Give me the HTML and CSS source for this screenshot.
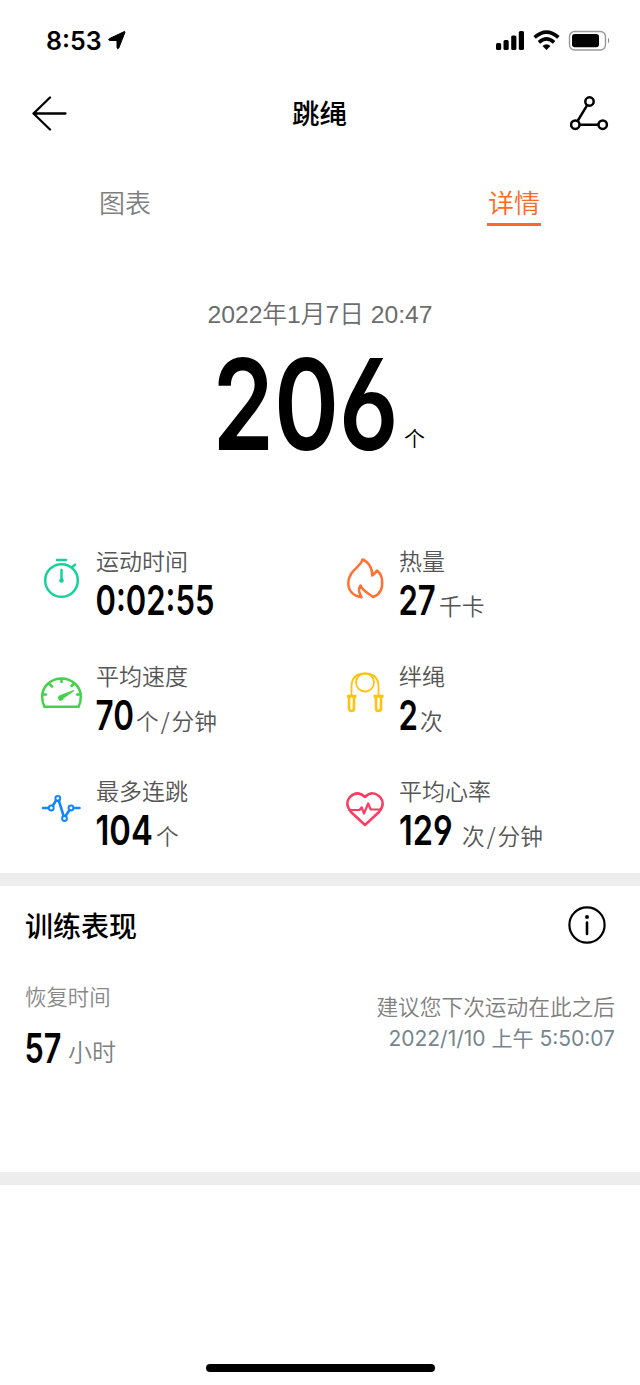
FILE: index.html
```html
<!DOCTYPE html>
<html lang="zh-CN">
<head>
<meta charset="utf-8">
<title>跳绳</title>
<link rel="stylesheet" href="styles.css">
</head>
<body>
<div class="screen">
  <header class="status">
    <div class="clock"><span>8:53</span>
      <svg width="18" height="19" viewBox="0 0 18 19"><path d="M17 1.200 10.800 17Q9.500 18.800 9 16.500V9.500H2Q-.5 9 1.600 7.500L15.800.8Q17.300.3 17 1.200Z" fill="#000" stroke="#000" stroke-linejoin="round"/></svg>
    </div>
    <svg class="signals" width="118" height="24" viewBox="494 28 118 24">
      <g fill="#000"><rect x="496" y="43" width="5.200" height="7" rx="1.500"/><rect x="503.500" y="40" width="5.200" height="10" rx="1.500"/><rect x="511.200" y="35.500" width="5.200" height="14.500" rx="1.500"/><rect x="518.800" y="31" width="5.200" height="19" rx="1.500"/></g>
      <g fill="none" stroke="#000" stroke-width="3.600"><path d="M534.600 37.300Q546.500 26.800 558.400 37.300"/><path d="M538.900 42.300Q546.500 35.600 554.100 42.300"/></g>
      <path d="M542.500 46Q546.500 42.300 550.500 46L546.500 50Z"/>
      <rect x="569.500" y="31.500" width="36" height="18.500" rx="5" fill="#fff" stroke="#999" stroke-width="1.400"/>
      <rect x="572" y="34" width="27" height="13.300" rx="2.800"/>
      <path d="M608 37.500Q610.500 40.500 608 43.500Z" fill="#888"/>
    </svg>
  </header>
  <nav class="nav">
    <svg width="36" height="36" viewBox="32 95 36 36"><path d="M50 97.500 33.500 113.500 50 129.500M33.500 113.500H65.500" fill="none" stroke="#000" stroke-width="2.300" stroke-linecap="round" stroke-linejoin="round"/></svg>
    <h1>跳绳</h1>
    <svg width="40" height="36" viewBox="569 95 40 36"><g fill="none" stroke="#000" stroke-width="2.500"><circle cx="589.500" cy="101.500" r="4.200"/><circle cx="575.300" cy="124.700" r="4.200"/><circle cx="602.700" cy="124.700" r="4.200"/><path d="M587.200 105.200 577.600 121M579.500 124.700H598.500"/></g></svg>
  </nav>
  <div class="tabs"><span class="tab">图表</span><span class="tab active">详情</span></div>

  <section class="summary">
    <div class="date">2022年1月7日 20:47</div>
    <div class="total">
      <svg class="digits" width="186" height="96" viewBox="0 0 186 96"><text transform="translate(-1.500 94) scale(.76 1)" font-size="126" textLength="245" lengthAdjust="spacingAndGlyphs">206</text></svg>
      <span>个</span>
    </div>
  </section>

  <section class="metrics">
    <div class="metric">
      <svg class="icon" width="44" height="44" viewBox="40 556 44 44"><g fill="none" stroke="#14d39a" stroke-width="2.500" stroke-linecap="round"><circle cx="61.500" cy="580.500" r="16.300"/><path d="M57 560H66M72 567.500 75 564.700M61.500 570V580"/></g><circle cx="61.500" cy="580.500" r="2.300" fill="#14d39a"/></svg>
      <div><div class="label">运动时间</div><div class="value"><svg class="digits" width="120" height="32" viewBox="0 0 120 32"><text transform="translate(-.5 31) scale(.76 1)" font-size="41.500" textLength="156.500" lengthAdjust="spacingAndGlyphs">0:02:55</text></svg></div></div>
    </div>
    <div class="metric">
      <svg class="icon" width="44" height="44" viewBox="343 556 44 44"><path d="M362.500 559.500C361 567 348.300 570.500 348.300 583C348.300 591 353.500 596 361.500 597.200C359.500 592.500 357.500 590 360.500 585.500C363.500 592 370 594 373 597C380 594.500 383 588 382 580C381.600 575.500 379.500 572.500 377 570.500Q375.500 573 372.300 575.500C372.500 568 368 561.500 362.500 559.500Z" fill="none" stroke="#ff7032" stroke-width="2.500" stroke-linejoin="round"/></svg>
      <div><div class="label">热量</div><div class="value"><svg class="digits" width="38" height="32" viewBox="0 0 38 32"><text transform="translate(-.5 31) scale(.76 1)" font-size="41.500" textLength="49" lengthAdjust="spacingAndGlyphs">27</text></svg><span class="unit gap2">千卡</span></div></div>
    </div>
    <div class="metric">
      <svg class="icon" width="44" height="44" viewBox="40 671 44 44"><g fill="none" stroke="#42d24b" stroke-width="2.500" stroke-linecap="round" stroke-linejoin="round"><path d="M44.500 706.800Q42 702 42.200 696.500A19.300 18 0 0 1 80.800 696.500Q81 702 78.500 706.800ZM43 694.500H46M77 694.500H80M50 684.500 52 686.500M61.500 679.500V682M71.500 686 73.500 684"/></g><path d="M59.300 695.500 73.500 690Q74.500 690.500 73.500 691.500L63.500 698.500A2.800 2.800 0 1 1 59.300 695.500Z" fill="#42d24b"/></svg>
      <div><div class="label">平均速度</div><div class="value"><svg class="digits" width="38" height="32" viewBox="0 0 38 32"><text transform="translate(-.5 31) scale(.76 1)" font-size="41.500" textLength="50.500" lengthAdjust="spacingAndGlyphs">70</text></svg><span class="unit gap2">个<i>/</i>分钟</span></div></div>
    </div>
    <div class="metric">
      <svg class="icon" width="44" height="44" viewBox="343 671 44 44"><g fill="none" stroke="#ffc30f" stroke-width="1.800"><circle cx="365" cy="682.500" r="9"/><path d="M351.500 695V687Q351.500 673.500 365 673.500Q378.500 673.500 378.500 687V695"/><path d="M347 696.200H356.500M373.500 696.200H383.500" stroke-width="3"/><path d="M349 697V708Q349 711 351.500 711Q354 711 354 708V697M376 697V708Q376 711 378.500 711Q381 711 381 708V697" stroke-width="2.600"/></g></svg>
      <div><div class="label">绊绳</div><div class="value"><svg class="digits" width="19" height="32" viewBox="0 0 19 32"><text transform="translate(-.5 31) scale(.76 1)" font-size="41.500" textLength="25.500" lengthAdjust="spacingAndGlyphs">2</text></svg><span class="unit gap2">次</span></div></div>
    </div>
    <div class="metric">
      <svg class="icon" width="44" height="44" viewBox="40 785 44 44"><g fill="none" stroke="#1387ff" stroke-width="2.600" stroke-linecap="round"><path d="M43 807H48.500M53 804.500 56 799.500M58.800 799.500 63.600 815M65.500 815 69.500 809M74 807H79.500"/><g stroke-width="2"><circle cx="51.300" cy="807" r="2.400"/><circle cx="57.800" cy="797.500" r="2.400"/><circle cx="64.500" cy="817.500" r="2.400"/><circle cx="71" cy="807" r="2.400"/></g></g></svg>
      <div><div class="label">最多连跳</div><div class="value"><svg class="digits" width="58" height="32" viewBox="0 0 58 32"><text transform="translate(-.5 31) scale(.76 1)" font-size="41.500" textLength="75.500" lengthAdjust="spacingAndGlyphs">104</text></svg><span class="unit gap2">个</span></div></div>
    </div>
    <div class="metric">
      <svg class="icon" width="44" height="44" viewBox="343 785 44 44"><g fill="none" stroke="#ff3c62" stroke-width="2.500" stroke-linejoin="round" stroke-linecap="round"><path d="M365 824 351 811Q344.500 803 349.500 796.500Q357 788.500 365 796Q373 788.500 380.500 796.500Q385.500 803 379 811Z"/><path d="M349.500 809H359.500L361.700 806.300 364 812.500 368.200 802.500 370.700 808.500H380.500" stroke-width="2.200"/></g></svg>
      <div><div class="label">平均心率</div><div class="value"><svg class="digits" width="55" height="32" viewBox="0 0 55 32"><text transform="translate(0 31) scale(.76 1)" font-size="41.500" textLength="70.500" lengthAdjust="spacingAndGlyphs">129</text></svg><span class="unit gap8">次<i>/</i>分钟</span></div></div>
    </div>
  </section>

  <div class="divider"></div>
  <section class="performance">
    <div class="heading"><h2>训练表现</h2>
      <svg width="40" height="40" viewBox="566 905 40 40"><circle cx="586" cy="925" r="17.600" fill="none" stroke="#000" stroke-width="2.200"/><circle cx="586" cy="917" r="2"/><path d="M586 922.500V934" stroke="#000" stroke-width="2.600" stroke-linecap="round"/></svg>
    </div>
    <div class="recovery">
      <div class="rest"><div class="small">恢复时间</div><div class="value"><svg class="digits" width="37" height="32" viewBox="0 0 37 32"><text transform="translate(-.5 31) scale(.76 1)" font-size="41.500" textLength="48.500" lengthAdjust="spacingAndGlyphs">57</text></svg><span class="unit hours">小时</span></div></div>
      <div class="advice"><div>建议您下次运动在此之后</div><div class="when">2022/1/10 上午 5:50:07</div></div>
    </div>
  </section>
  <div class="divider"></div>
  <footer><div class="home"></div></footer>
</div>
</body>
</html>
```
FILE: styles.css
```css
* { box-sizing: border-box; }
body { margin: 0; background: #fff; color: #000; font-family: "Noto Sans CJK SC", sans-serif; }
svg { display: block; flex: none; }
h1, h2 { margin: 0; font-size: 28px; font-weight: 500; line-height: 40px; }
.screen { width: 640px; height: 1385px; display: flex; flex-direction: column; overflow: hidden; }
.status { height: 80px; padding: 0 28px 0 46px; display: flex; align-items: center; justify-content: space-between; }
.clock { display: flex; align-items: center; gap: 6px; font: 600 25px/30px Inter, sans-serif; padding-top: 1px; }
.nav { height: 66px; padding: 0 31px 0 32px; display: flex; align-items: center; justify-content: space-between; }
.nav h1 { font-size: 27.5px; line-height: 38px; padding: 0 0 2px 2px; }
.tabs { height: 81px; padding: 37px 99px 0; display: flex; justify-content: space-between; align-items: flex-start; }
.tab { font-size: 26px; font-weight: 350; line-height: 38px; color: #808080; }
.tab.active { color: #fa6b27; height: 43px; border-bottom: 3px solid #fa6b27; padding: 0 1px; }
.summary { height: 316px; padding-top: 70px; }
.date { font: 24.7px/36px "Liberation Sans", "Noto Sans CJK SC", sans-serif; font-weight: 350; color: #6c6c6c; text-align: center; }
.total { display: flex; align-items: flex-end; margin: 23px 0 0 214px; }
.total span { font-size: 21px; line-height: 22px; font-weight: 350; margin-left: 4px; padding-bottom: 4px; }
.digits { overflow: visible; font-family: Inter, sans-serif; font-weight: 600; font-feature-settings: "cv03", "cv04"; }
.metrics { height: 330px; display: grid; grid-template-columns: 303px 337px; grid-auto-rows: 115px; }
.metric { display: flex; gap: 12px; padding-left: 40px; }
.icon { margin-top: 13px; }
.label { font-size: 23px; font-weight: 350; line-height: 34px; height: 41px; color: #555; }
.value { display: flex; align-items: flex-end; height: 32px; }
.unit { font-size: 22.7px; font-weight: 350; line-height: 30px; color: #555; margin-bottom: -5px; }
.unit i { font-style: normal; margin: 0 2px; }
.gap2 { margin-left: 2px; }
.gap8 { margin-left: 8px; }
.divider { height: 13px; flex: none; background: #ededed; }
.performance { height: 286px; flex: none; padding: 0 25px; }
.heading { display: flex; justify-content: space-between; padding: 19px 8px 0 0; }
.recovery { display: flex; justify-content: space-between; padding-top: 35px; }
.small { font-size: 21.4px; line-height: 32px; color: #888; font-weight: 350; height: 52px; }
.rest .unit { color: #808080; font-size: 24px; margin-bottom: -2px; }
.hours { margin-left: 6px; }
.advice { text-align: right; padding-top: 10px; font-size: 21.7px; line-height: 32px; font-weight: 350; color: #808080; }
.when { font-family: Inter, "Noto Sans CJK SC", sans-serif; font-weight: 400; font-size: 21px; color: #74868f; padding-top: 1px; }
footer { flex: 1; display: flex; justify-content: center; align-items: flex-end; padding-bottom: 13px; }
.home { width: 229px; height: 8px; border-radius: 4px; background: #000; }
```
